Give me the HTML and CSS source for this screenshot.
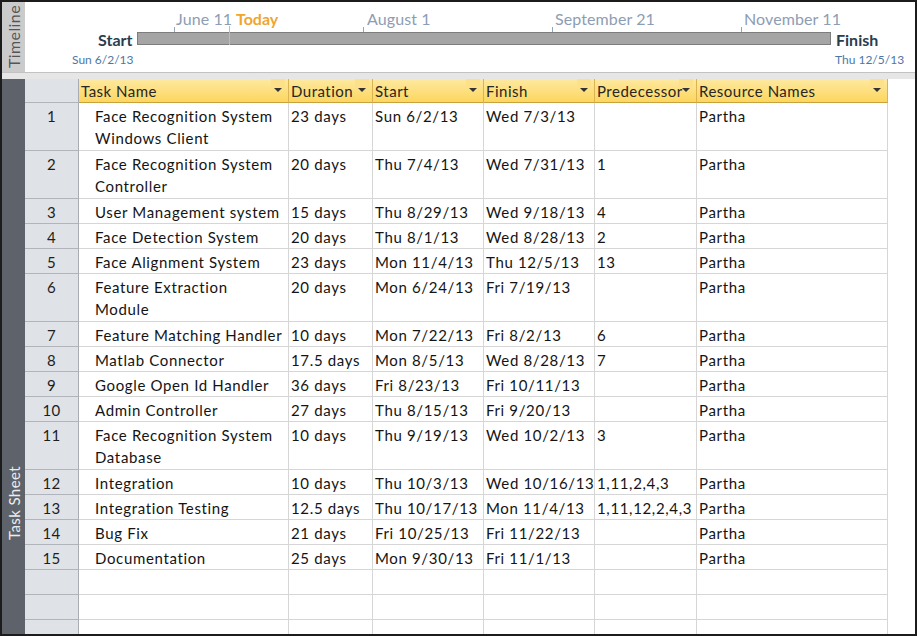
FILE: index.html
```html
<!DOCTYPE html>
<html>
<head>
<meta charset="utf-8">
<link rel="stylesheet" href="styles.css">
</head>
<body>
<div class="frame">
  <div class="timeline">
    <div class="tl-label"><span>Timeline</span></div>
    <div class="tl-canvas">
      <span class="tl-month" style="left:151px">June 11</span>
      <span class="tl-tick" style="left:149px"></span>
      <span class="tl-today-line" style="left:204px"></span>
      <span class="tl-today" style="left:211px">Today</span>
      <span class="tl-month" style="left:342px">August 1</span>
      <span class="tl-tick" style="left:338px"></span>
      <span class="tl-month" style="left:530px">September 21</span>
      <span class="tl-tick" style="left:527px"></span>
      <span class="tl-month" style="left:719px">November 11</span>
      <span class="tl-tick" style="left:716px"></span>
      <span class="tl-end tl-start">Start</span>
      <div class="tl-bar"></div>
      <span class="tl-end tl-finish">Finish</span>
      <span class="tl-date tl-date-start">Sun 6/2/13</span>
      <span class="tl-date tl-date-finish">Thu 12/5/13</span>
    </div>
  </div>
  <div class="sep"></div>
  <div class="sheet">
    <div class="ts-label"><span>Task Sheet</span></div>
    <div class="grid-area">
      <div class="row head">
        <div class="c num"></div>
        <div class="c h">Task Name<i class="dd"></i></div>
        <div class="c h">Duration<i class="dd"></i></div>
        <div class="c h">Start<i class="dd"></i></div>
        <div class="c h">Finish<i class="dd"></i></div>
        <div class="c h">Predecessor<i class="dd"></i></div>
        <div class="c h">Resource Names<i class="dd"></i></div>
      </div>
      <div class="row tall"><div class="c num">1</div><div class="c name">Face Recognition System<br>Windows Client</div><div class="c">23 days</div><div class="c">Sun 6/2/13</div><div class="c">Wed 7/3/13</div><div class="c"></div><div class="c">Partha</div></div>
      <div class="row tall"><div class="c num">2</div><div class="c name">Face Recognition System<br>Controller</div><div class="c">20 days</div><div class="c">Thu 7/4/13</div><div class="c">Wed 7/31/13</div><div class="c">1</div><div class="c">Partha</div></div>
      <div class="row"><div class="c num">3</div><div class="c name">User Management system</div><div class="c">15 days</div><div class="c">Thu 8/29/13</div><div class="c">Wed 9/18/13</div><div class="c">4</div><div class="c">Partha</div></div>
      <div class="row"><div class="c num">4</div><div class="c name">Face Detection System</div><div class="c">20 days</div><div class="c">Thu 8/1/13</div><div class="c">Wed 8/28/13</div><div class="c">2</div><div class="c">Partha</div></div>
      <div class="row"><div class="c num">5</div><div class="c name">Face Alignment System</div><div class="c">23 days</div><div class="c">Mon 11/4/13</div><div class="c">Thu 12/5/13</div><div class="c">13</div><div class="c">Partha</div></div>
      <div class="row tall"><div class="c num">6</div><div class="c name">Feature Extraction<br>Module</div><div class="c">20 days</div><div class="c">Mon 6/24/13</div><div class="c">Fri 7/19/13</div><div class="c"></div><div class="c">Partha</div></div>
      <div class="row"><div class="c num">7</div><div class="c name">Feature Matching Handler</div><div class="c">10 days</div><div class="c">Mon 7/22/13</div><div class="c">Fri 8/2/13</div><div class="c">6</div><div class="c">Partha</div></div>
      <div class="row"><div class="c num">8</div><div class="c name">Matlab Connector</div><div class="c">17.5 days</div><div class="c">Mon 8/5/13</div><div class="c">Wed 8/28/13</div><div class="c">7</div><div class="c">Partha</div></div>
      <div class="row"><div class="c num">9</div><div class="c name">Google Open Id Handler</div><div class="c">36 days</div><div class="c">Fri 8/23/13</div><div class="c">Fri 10/11/13</div><div class="c"></div><div class="c">Partha</div></div>
      <div class="row"><div class="c num">10</div><div class="c name">Admin Controller</div><div class="c">27 days</div><div class="c">Thu 8/15/13</div><div class="c">Fri 9/20/13</div><div class="c"></div><div class="c">Partha</div></div>
      <div class="row tall"><div class="c num">11</div><div class="c name">Face Recognition System<br>Database</div><div class="c">10 days</div><div class="c">Thu 9/19/13</div><div class="c">Wed 10/2/13</div><div class="c">3</div><div class="c">Partha</div></div>
      <div class="row"><div class="c num">12</div><div class="c name">Integration</div><div class="c">10 days</div><div class="c">Thu 10/3/13</div><div class="c">Wed 10/16/13</div><div class="c">1,11,2,4,3</div><div class="c">Partha</div></div>
      <div class="row"><div class="c num">13</div><div class="c name">Integration Testing</div><div class="c">12.5 days</div><div class="c">Thu 10/17/13</div><div class="c">Mon 11/4/13</div><div class="c">1,11,12,2,4,3</div><div class="c">Partha</div></div>
      <div class="row"><div class="c num">14</div><div class="c name">Bug Fix</div><div class="c">21 days</div><div class="c">Fri 10/25/13</div><div class="c">Fri 11/22/13</div><div class="c"></div><div class="c">Partha</div></div>
      <div class="row"><div class="c num">15</div><div class="c name">Documentation</div><div class="c">25 days</div><div class="c">Mon 9/30/13</div><div class="c">Fri 11/1/13</div><div class="c"></div><div class="c">Partha</div></div>
      <div class="row"><div class="c num"></div><div class="c"></div><div class="c"></div><div class="c"></div><div class="c"></div><div class="c"></div><div class="c"></div></div>
      <div class="row"><div class="c num"></div><div class="c"></div><div class="c"></div><div class="c"></div><div class="c"></div><div class="c"></div><div class="c"></div></div>
      <div class="row"><div class="c num"></div><div class="c"></div><div class="c"></div><div class="c"></div><div class="c"></div><div class="c"></div><div class="c"></div></div>
      <div class="fill"><div class="fill-num"></div></div>
    </div>
  </div>
</div>
</body>
</html>
```
FILE: styles.css
```css
html, body {
  margin: 0;
  padding: 0;
  background: #ffffff;
}
.frame {
  box-sizing: border-box;
  width: 917px;
  height: 636px;
  border: 2px solid #1c1c1c;
  display: flex;
  flex-direction: column;
  overflow: hidden;
  font-family: Lato, "Open Sans", sans-serif;
  color: #111;
}
.timeline {
  height: 70px;
  display: flex;
  flex: none;
}
.tl-label {
  width: 23px;
  background: #cbcbcb;
  display: flex;
  justify-content: center;
  align-items: center;
}
.tl-label span {
  writing-mode: vertical-rl;
  transform: rotate(180deg);
  font-size: 16px;
  color: #555;
  letter-spacing: 0.4px;
}
.tl-canvas {
  flex: 1;
  position: relative;
  background: #fff;
}
.tl-month {
  position: absolute;
  top: 8px;
  font-size: 16px;
  color: #8d9db3;
  line-height: 18px;
  letter-spacing: 0.1px;
}
.tl-today {
  position: absolute;
  top: 8px;
  font-size: 16px;
  font-weight: bold;
  color: #f0a530;
  line-height: 18px;
}
.tl-tick {
  position: absolute;
  top: 25px;
  width: 1px;
  height: 6px;
  background: #95a4b8;
}
.tl-today-line {
  position: absolute;
  top: 24px;
  width: 1px;
  height: 19px;
  background: #f2b35a;
  z-index: 2;
}
.tl-bar {
  position: absolute;
  left: 112px;
  top: 30px;
  width: 692px;
  height: 11px;
  background: #a5a5a5;
  border: 1px solid #7d7d7d;
}
.tl-end {
  position: absolute;
  top: 28px;
  font-size: 16px;
  font-weight: bold;
  color: #2a3d4e;
  line-height: 19px;
}
.tl-start { left: 73px; }
.tl-finish { left: 811px; }
.tl-date {
  position: absolute;
  top: 51px;
  font-size: 12px;
  color: #4f76a6;
  line-height: 14px;
}
.tl-date-start { left: 47px; }
.tl-date-finish { left: 810px; }

.sep {
  height: 6px;
  flex: none;
  border-top: 1px solid #c2c2c2;
  background: #e6e6e6;
}
.sheet {
  flex: 1;
  display: flex;
  min-height: 0;
}
.ts-label {
  width: 23px;
  flex: none;
  background: #5e636b;
  display: flex;
  flex-direction: column;
  justify-content: flex-end;
  align-items: center;
  padding-bottom: 94px;
  box-sizing: border-box;
}
.ts-label span {
  writing-mode: vertical-rl;
  transform: rotate(180deg);
  font-size: 15px;
  color: #ececec;
  letter-spacing: 0.4px;
}
.grid-area {
  flex: 1;
  display: flex;
  flex-direction: column;
  min-height: 0;
  overflow: hidden;
}
.row {
  display: grid;
  grid-template-columns: 54px 210px 84px 111px 111px 102px 191px;
  height: 25px;
  flex: none;
}
.row.tall { height: 48px; }
.row.head { height: 24px; }
.c {
  box-sizing: border-box;
  border-right: 1px solid #d6d6d6;
  border-bottom: 1px solid #d6d6d6;
  padding: 2px 0 0 2px;
  font-size: 15px;
  line-height: 22px;
  letter-spacing: 0.65px;
  white-space: nowrap;
  overflow: hidden;
  color: #141414;
}
.c.name { padding-left: 16px; }
.c.num {
  background: #dfe2e7;
  border-right: 1px solid #a9adb3;
  border-bottom: 1px solid #b1b5bb;
  padding-left: 0;
  text-align: center;
  color: #1e1e1e;
  letter-spacing: 0.3px;
}
.c.h {
  background: linear-gradient(#fee9a1, #fcd65e);
  border-right: 1px solid #d9b451;
  border-bottom: 1px solid #c9a23e;
  padding-top: 1px;
  position: relative;
  color: #262626;
  letter-spacing: 0.5px;
}
.dd {
  position: absolute;
  right: 6px;
  top: 9px;
  width: 0;
  height: 0;
  border-left: 4px solid transparent;
  border-right: 4px solid transparent;
  border-top: 4px solid #333;
  box-shadow: 0 -6px 0 3px #fde08a;
}
.fill {
  flex: 1;
  display: flex;
}
.fill-num {
  width: 54px;
  box-sizing: border-box;
  background: #dfe2e7;
  border-right: 1px solid #a9adb3;
}
```
